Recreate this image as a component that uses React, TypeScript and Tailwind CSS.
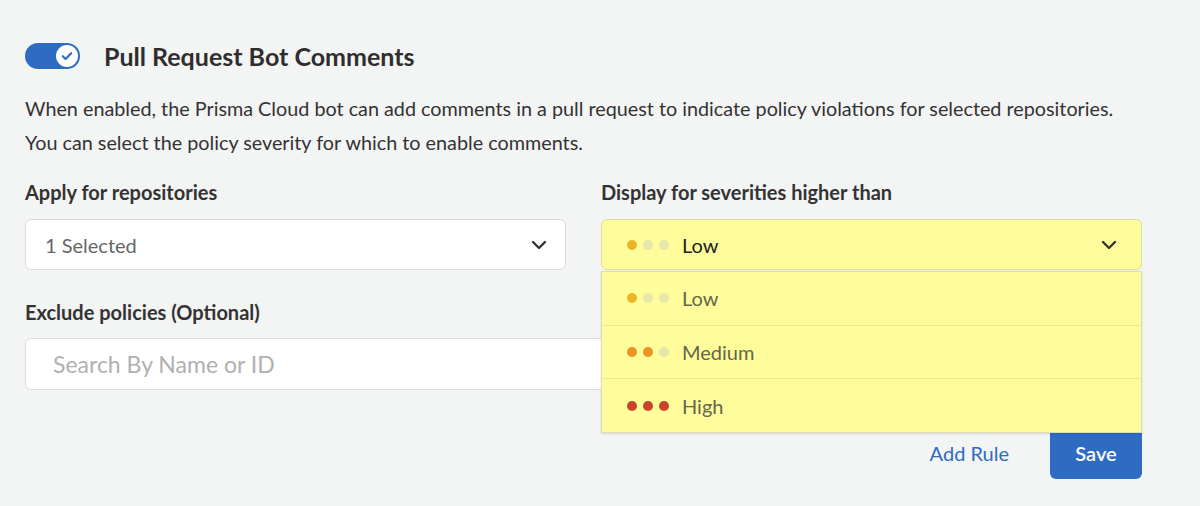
import React from "react";

function Chevron({ className = "" }: { className?: string }) {
  return (
    <svg width="16" height="10" viewBox="0 0 16 10" className={className}>
      <path d="M2 2 L8 8 L14 2" fill="none" stroke="#333" strokeWidth="2.4" strokeLinecap="round" strokeLinejoin="round" />
    </svg>
  );
}

function Dots({ level }: { level: 1 | 2 | 3 }) {
  const colors =
    level === 1
      ? ["bg-[#ecb426]", "bg-[#e8e7ab]", "bg-[#e8e7ab]"]
      : level === 2
      ? ["bg-[#e9951f]", "bg-[#e9951f]", "bg-[#e8e7ab]"]
      : ["bg-[#c9432b]", "bg-[#c9432b]", "bg-[#c9432b]"];
  return (
    <div className="flex items-center gap-[6px]">
      {colors.map((c, i) => (
        <span key={i} className={`block w-[10px] h-[10px] rounded-full ${c}`} />
      ))}
    </div>
  );
}

export default function App() {
  const items: { label: string; level: 1 | 2 | 3 }[] = [
    { label: "Low", level: 1 },
    { label: "Medium", level: 2 },
    { label: "High", level: 3 },
  ];
  return (
    <div className="w-[1200px] h-[506px] overflow-hidden bg-[#f3f4f4] font-['Lato',sans-serif] text-[#333] pt-[43px] pl-[25px]">
      <div className="w-[1117px]">
        <div className="flex items-center h-[26px]">
          <div className="w-[55px] h-[26px] rounded-full bg-[#2e6cc4] flex items-center justify-end pr-[2px]">
            <div className="w-[22px] h-[22px] rounded-full bg-white flex items-center justify-center">
              <svg width="12" height="10" viewBox="0 0 12 10">
                <path d="M1.8 5.2 L4.6 8 L10.2 2.2" fill="none" stroke="#2e6cc4" strokeWidth="2.2" strokeLinecap="round" strokeLinejoin="round" />
              </svg>
            </div>
          </div>
          <div className="ml-[24px] text-[25px] font-bold leading-[26px] text-[#2e2e2e]">Pull Request Bot Comments</div>
        </div>

        <div className="mt-[22px] text-[19.8px] leading-[34px] text-[#333] whitespace-nowrap">
          <div>When enabled, the Prisma Cloud bot can add comments in a pull request to indicate policy violations for selected repositories.</div>
          <div>You can select the policy severity for which to enable comments.</div>
        </div>

        <div className="mt-[21px] grid grid-cols-[541px_541px] gap-x-[35px]">
          <div>
            <div className="text-[20px] leading-[24px] font-bold">Apply for repositories</div>
            <div className="mt-[15px] h-[51px] bg-white border border-[#dcdcdc] rounded-[6px] flex items-center justify-between pl-[19px] pr-[18px]">
              <span className="text-[20px] text-[#666]">1 Selected</span>
              <Chevron />
            </div>
          </div>
          <div>
            <div className="text-[20px] leading-[24px] font-bold">Display for severities higher than</div>
            <div className="relative mt-[15px] z-10">
              <div className="h-[51px] bg-[#fffc9c] border border-[#e0de9c] rounded-[6px] flex items-center justify-between pl-[25px] pr-[24px]">
                <div className="flex items-center gap-[13px]">
                  <Dots level={1} />
                  <span className="text-[20px] text-[#222]">Low</span>
                </div>
                <Chevron />
              </div>
              <div className="absolute left-0 right-0 top-[52px] h-[162px] bg-[#fffc9c] border border-[#dedcb8] shadow-[0_1px_2px_rgba(0,0,0,0.12)] flex flex-col">
                {items.map((it, i) => (
                  <div
                    key={it.label}
                    className={`flex-1 flex items-center gap-[13px] pl-[25px] ${i > 0 ? "border-t border-[#ebe890]" : ""}`}
                  >
                    <Dots level={it.level} />
                    <span className="text-[20px] text-[#66664a]">{it.label}</span>
                  </div>
                ))}
              </div>
            </div>
          </div>
        </div>

        <div className="mt-[30px] text-[20px] leading-[24px] font-bold">Exclude policies (Optional)</div>
        <div className="mt-[14px] h-[52px] bg-white border border-[#dcdcdc] rounded-[6px] flex items-center pl-[27px]">
          <span className="text-[23px] text-[#b0b0b0]">Search By Name or ID</span>
        </div>

        <div className="mt-[37px] flex items-center justify-end gap-[41px]">
          <span className="text-[20px] text-[#2e6cc4]">Add Rule</span>
          <div className="w-[92px] h-[52px] rounded-[6px] bg-[#2e6cc4] text-white text-[20px] font-semibold flex items-center justify-center">
            Save
          </div>
        </div>
      </div>
    </div>
  );
}
